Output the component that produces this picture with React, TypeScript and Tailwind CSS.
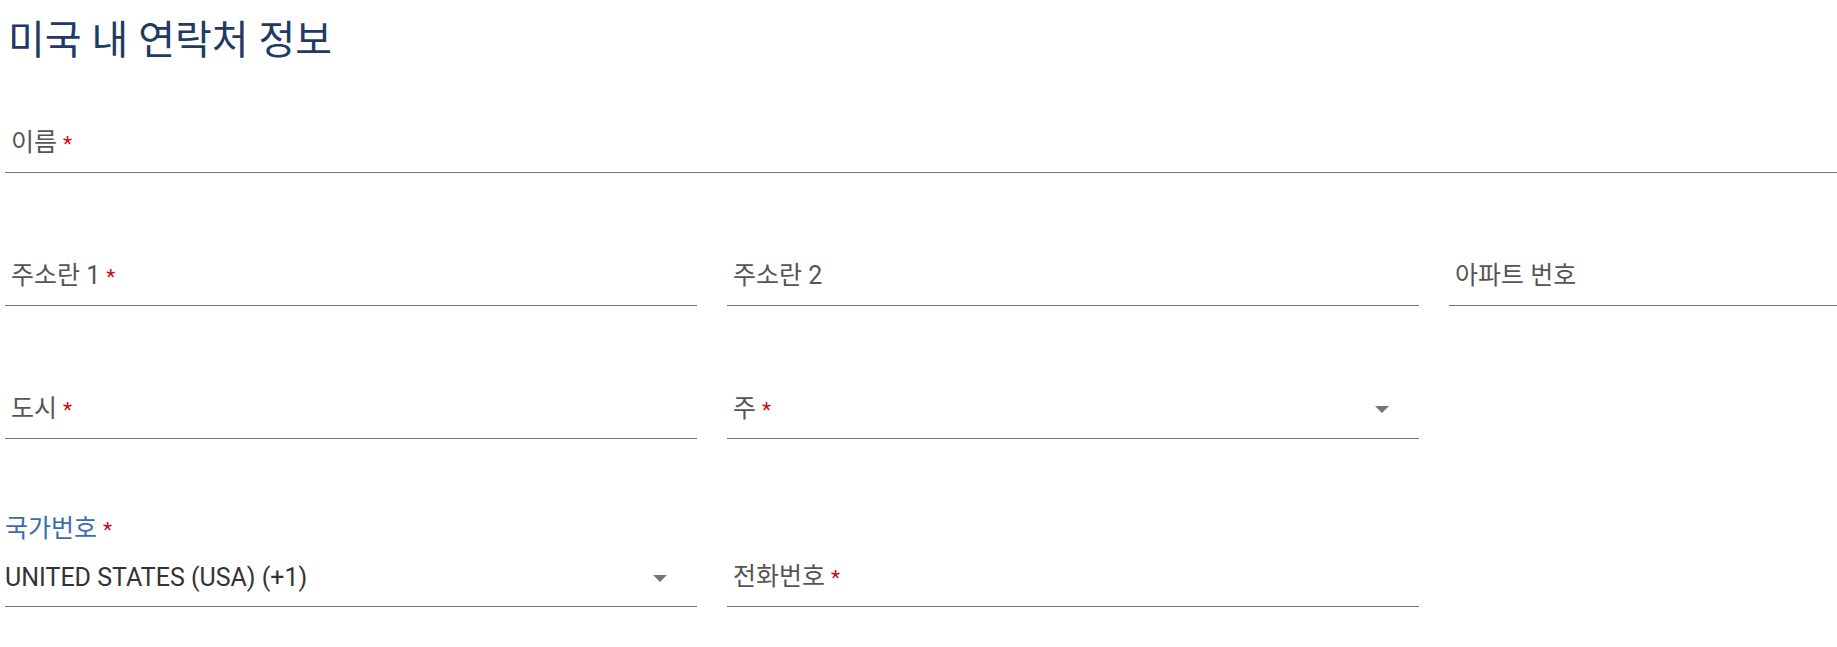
import React from "react";

const font = { fontFamily: 'Roboto, "Noto Sans CJK KR", sans-serif' };

function Star() {
  return <span className="ml-[6px] text-[21px] text-[#d0021b]">*</span>;
}

function Arrow() {
  return (
    <svg width="14" height="7" viewBox="0 0 14 7" className="mr-[30px] shrink-0">
      <path d="M0 0 L14 0 L7 7 Z" fill="#757575" />
    </svg>
  );
}

function Field({
  label,
  required,
  select,
}: {
  label: string;
  required?: boolean;
  select?: boolean;
}) {
  return (
    <div className="flex h-[60px] items-end border-b border-[#777777] pb-[14px]">
      <div className="flex flex-1 items-center justify-between h-[30px]">
        <span className="pl-[6px] text-[25px] leading-[30px] text-[#555555]">
          {label}
          {required && <Star />}
        </span>
        {select && <Arrow />}
      </div>
    </div>
  );
}

export default function App() {
  return (
    <div className="w-[1837px] h-[647px] overflow-hidden bg-white" style={font}>
      <div className="w-[2140px] pl-[5px]">
        {/* Title */}
        <h1 className="pt-[17px] pl-[3px] text-[40px] leading-[48px] font-normal text-[#1f3b63]">
          미국 내 연락처 정보
        </h1>

        {/* Name */}
        <div className="mt-[48px]">
          <Field label="이름" required />
        </div>

        {/* Address */}
        <div className="mt-[73px] grid grid-cols-[692px_692px_692px] gap-x-[30px]">
          <Field label="주소란 1" required />
          <Field label="주소란 2" />
          <Field label="아파트 번호" />
        </div>

        {/* City / state */}
        <div className="mt-[73px] grid grid-cols-[692px_692px_692px] gap-x-[30px]">
          <Field label="도시" required />
          <Field label="주" required select />
        </div>

        {/* Phone */}
        <div className="mt-[75px] grid grid-cols-[692px_692px_692px] gap-x-[30px] items-end">
          <div className="flex h-[93px] flex-col border-b border-[#777777]">
            <span className="text-[25px] leading-[30px] text-[#3b6cb0]">
              국가번호
              <Star />
            </span>
            <div className="mt-[18px] flex h-[30px] items-center justify-between">
              <span className="text-[25px] leading-[30px] text-[#333333]">
                UNITED STATES (USA) (+1)
              </span>
              <Arrow />
            </div>
          </div>
          <Field label="전화번호" required />
        </div>
      </div>
    </div>
  );
}
